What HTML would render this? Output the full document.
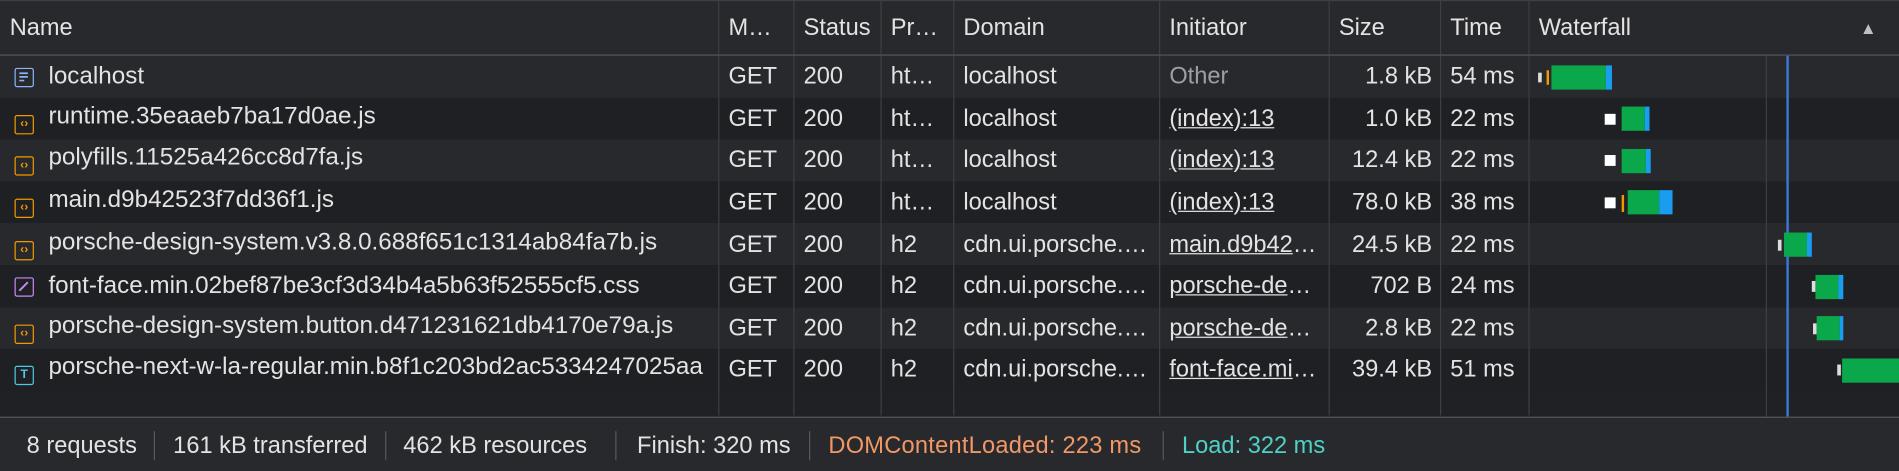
<!DOCTYPE html>
<html><head><meta charset="utf-8"><style>
html,body{margin:0;padding:0;background:#202124;overflow:hidden}
#wrap{width:1568px;height:389px;transform:scale(1.2111);transform-origin:0 0;position:relative;background:#202124;font-family:"Liberation Sans",sans-serif;font-size:19.5px;color:#e3e3e3}
table{border-collapse:collapse;table-layout:fixed;position:absolute;left:0;top:0;width:1568px}
td,th{white-space:nowrap;overflow:hidden;text-overflow:ellipsis;padding:0 6px 0 8px;border-right:1px solid #3d3f43;font-weight:normal;text-align:left;vertical-align:middle;line-height:22px}
th{height:44px;background:#28292c;border-bottom:1px solid #55585c;border-top:1px solid #3d3f43}
td{height:34.6px}
td.n{padding-left:12px;font-size:20px}
tr.a td{background:#28292c}
tr.b td{background:#1f2023}
tr.e td{height:20px;background:#202124}
.r{text-align:right}
.u{text-decoration:underline}
.g{color:#9aa0a6}
.ic{display:inline-block;box-sizing:border-box;width:16px;height:16px;border:1.5px solid;border-radius:2px;vertical-align:-3px;margin-right:12px;position:relative;font-size:10px;line-height:13px;text-align:center;font-weight:bold}
.js{border-color:#f29900;color:#f29900}
.doc{border-color:#8ab4f8}
.css{border-color:#c58af9;color:#c58af9}
.fnt{border-color:#4ec9e6;color:#4ec9e6}
.bar{position:absolute;height:20px}
#foot{position:absolute;left:0;top:344px;width:1568px;height:45px;border-top:1px solid #55585c;background:#28292c}
#foot span{position:absolute;top:11px;line-height:24px}
#foot i{position:absolute;top:11px;width:1px;height:24px;background:#55585c}
</style></head><body><div id="wrap">
<table>
<colgroup><col style="width:593px"><col style="width:62px"><col style="width:72px"><col style="width:60px"><col style="width:170px"><col style="width:140px"><col style="width:92px"><col style="width:73px"><col style="width:306px"></colgroup>
<tr><th>Name</th><th>M…</th><th style="padding-right:0">Status</th><th>Pr…</th><th>Domain</th><th>Initiator</th><th>Size</th><th>Time</th><th>Waterfall<span style="float:right;font-size:14px;color:#c0c0c0;margin-right:12px">▲</span></th></tr>
<tr class="a"><td class="n"><span class="ic doc"><svg width="13" height="13" style="position:absolute;left:0;top:0"><path d="M3 3.5h7M3 6.5h7M3 9.5h4" stroke="#8ab4f8" stroke-width="1.4"/></svg></span>localhost</td><td>GET</td><td>200</td><td>ht…</td><td>localhost</td><td class="g">Other</td><td class="r">1.8 kB</td><td>54 ms</td><td></td></tr>
<tr class="b"><td class="n"><span class="ic js">‹›</span>runtime.35eaaeb7ba17d0ae.js</td><td>GET</td><td>200</td><td>ht…</td><td>localhost</td><td class="u">(index):13</td><td class="r">1.0 kB</td><td>22 ms</td><td></td></tr>
<tr class="a"><td class="n"><span class="ic js">‹›</span>polyfills.11525a426cc8d7fa.js</td><td>GET</td><td>200</td><td>ht…</td><td>localhost</td><td class="u">(index):13</td><td class="r">12.4 kB</td><td>22 ms</td><td></td></tr>
<tr class="b"><td class="n"><span class="ic js">‹›</span>main.d9b42523f7dd36f1.js</td><td>GET</td><td>200</td><td>ht…</td><td>localhost</td><td class="u">(index):13</td><td class="r">78.0 kB</td><td>38 ms</td><td></td></tr>
<tr class="a"><td class="n"><span class="ic js">‹›</span>porsche-design-system.v3.8.0.688f651c1314ab84fa7b.js</td><td>GET</td><td>200</td><td>h2</td><td>cdn.ui.porsche.com</td><td class="u">main.d9b42523f7</td><td class="r">24.5 kB</td><td>22 ms</td><td></td></tr>
<tr class="b"><td class="n"><span class="ic css"><svg width="13" height="13" style="position:absolute;left:0;top:0"><path d="M3 10L10 3" stroke="#c58af9" stroke-width="1.6"/></svg></span>font-face.min.02bef87be3cf3d34b4a5b63f52555cf5.css</td><td>GET</td><td>200</td><td>h2</td><td>cdn.ui.porsche.com</td><td class="u">porsche-design</td><td class="r">702 B</td><td>24 ms</td><td></td></tr>
<tr class="a"><td class="n"><span class="ic js">‹›</span>porsche-design-system.button.d471231621db4170e79a.js</td><td>GET</td><td>200</td><td>h2</td><td>cdn.ui.porsche.com</td><td class="u">porsche-design</td><td class="r">2.8 kB</td><td>22 ms</td><td></td></tr>
<tr class="b"><td class="n"><span class="ic fnt">T</span>porsche-next-w-la-regular.min.b8f1c203bd2ac5334247025aa</td><td>GET</td><td>200</td><td>h2</td><td>cdn.ui.porsche.com</td><td class="u">font-face.min.css</td><td class="r">39.4 kB</td><td>51 ms</td><td></td></tr>
<tr class="e"><td></td><td></td><td></td><td></td><td></td><td></td><td></td><td></td><td></td></tr>
</table>
<div style="position:absolute;left:1458px;top:46px;width:1px;height:298px;background:#3d3f43"></div>
<div style="position:absolute;left:1475px;top:46px;width:1.5px;height:298px;background:#3b78d8"></div>
<div class="bar" style="left:1270px;top:60px;width:3px;height:8px;background:#ddd"></div>
<div class="bar" style="left:1277px;top:58px;width:1.5px;height:12px;background:#f29900"></div>
<div class="bar" style="left:1281px;top:54px;width:45px;background:#0aa74b"></div>
<div class="bar" style="left:1326px;top:54px;width:5px;background:#1a9cf0"></div>
<div class="bar" style="left:1325px;top:94px;width:9px;height:9px;background:#fff"></div>
<div class="bar" style="left:1339px;top:88px;width:19px;background:#0aa74b"></div>
<div class="bar" style="left:1358px;top:88px;width:4px;background:#1a9cf0"></div>
<div class="bar" style="left:1325px;top:128px;width:9px;height:9px;background:#fff"></div>
<div class="bar" style="left:1339px;top:123px;width:20px;background:#0aa74b"></div>
<div class="bar" style="left:1359px;top:123px;width:4px;background:#1a9cf0"></div>
<div class="bar" style="left:1325px;top:163px;width:9px;height:9px;background:#fff"></div>
<div class="bar" style="left:1339px;top:161px;width:1.5px;height:14px;background:#f29900"></div>
<div class="bar" style="left:1344px;top:157px;width:26px;background:#0aa74b"></div>
<div class="bar" style="left:1370px;top:157px;width:11px;background:#1a9cf0"></div>
<div class="bar" style="left:1468px;top:198px;width:3px;height:9px;background:#ddd"></div>
<div class="bar" style="left:1473px;top:192px;width:19px;background:#0aa74b"></div>
<div class="bar" style="left:1492px;top:192px;width:4px;background:#1a9cf0"></div>
<div class="bar" style="left:1496px;top:232px;width:3px;height:9px;background:#ddd"></div>
<div class="bar" style="left:1499px;top:227px;width:19px;background:#0aa74b"></div>
<div class="bar" style="left:1518px;top:227px;width:4px;background:#1a9cf0"></div>
<div class="bar" style="left:1497px;top:267px;width:3px;height:9px;background:#ddd"></div>
<div class="bar" style="left:1500px;top:261px;width:19px;background:#0aa74b"></div>
<div class="bar" style="left:1519px;top:261px;width:3px;background:#1a9cf0"></div>
<div class="bar" style="left:1517px;top:301px;width:3px;height:9px;background:#ddd"></div>
<div class="bar" style="left:1521px;top:296px;width:47px;background:#0aa74b"></div>
<div id="foot">
<span style="left:22px">8 requests</span><i style="left:127px"></i>
<span style="left:143px">161 kB transferred</span><i style="left:318px"></i>
<span style="left:333px">462 kB resources</span><i style="left:508px"></i>
<span style="left:526px">Finish: 320 ms</span><i style="left:668px"></i>
<span style="left:684px;color:#f29766;letter-spacing:0.2px">DOMContentLoaded: 223 ms</span><i style="left:960px"></i>
<span style="left:976px;color:#4fd1c5">Load: 322 ms</span>
</div>
</div></body></html>
